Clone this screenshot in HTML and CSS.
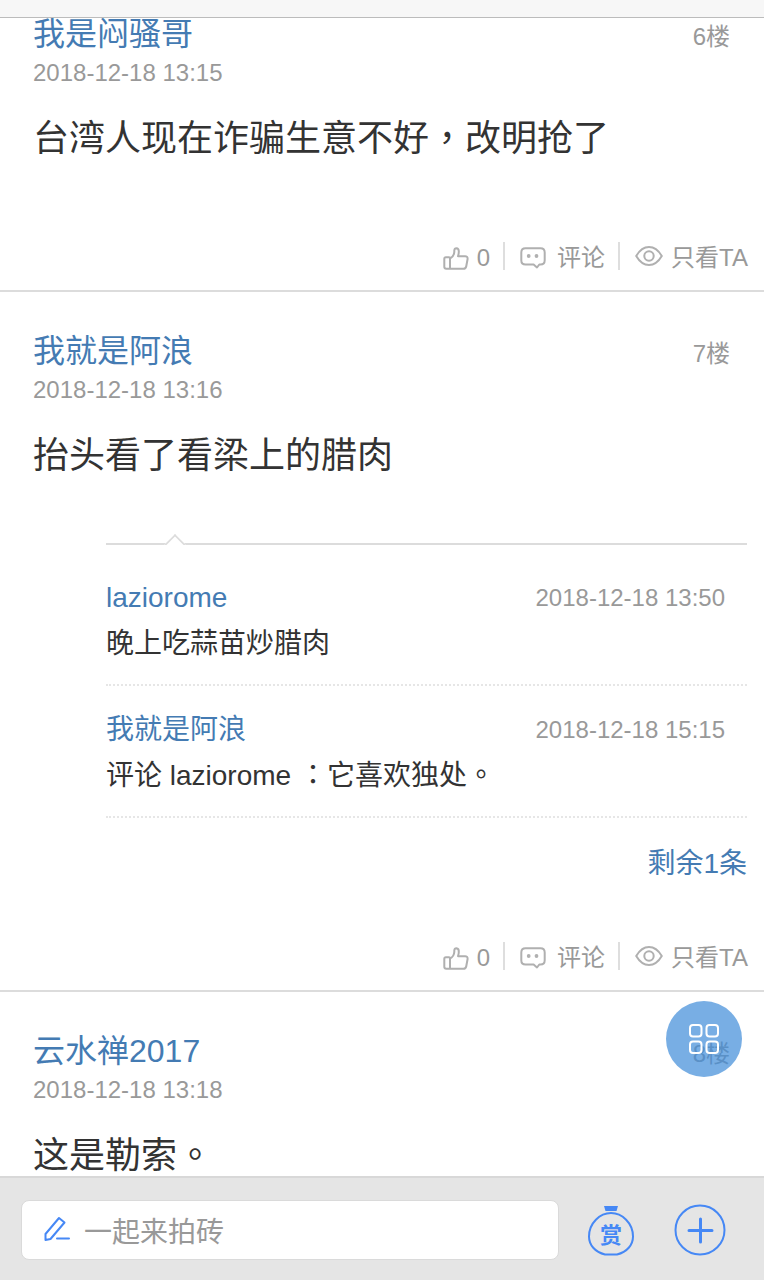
FILE: index.html
```html
<!DOCTYPE html>
<html lang="zh-Hant">
<head>
<meta charset="utf-8">
<meta name="viewport" content="width=device-width, initial-scale=1">
<title>帖子回复</title>
<link rel="stylesheet" href="styles.css">
</head>
<body>
<svg class="sprite" aria-hidden="true">
  <symbol id="like" viewBox="0 0 26 24">
    <path d="M2.800 11.200H6q1 0 1 1v10.600H3.300Q1.300 22.800 1.300 20.800V12.700Q1.300 11.200 2.800 11.200ZM7 12.500Q11 10.500 11.300 6V4.500Q11.500 2.300 13.400 2.300Q16 2.500 15.800 6Q15.700 8.500 15 10.200H22Q24.800 10.200 24.600 13L23.200 20.500Q22.800 22.800 20.400 22.800H7"/>
  </symbol>
  <symbol id="comment" viewBox="0 0 26 24">
    <path d="M5.500 2.200H20.500Q24.700 2.200 24.700 6.400V14.300Q24.700 18.500 20.500 18.500H19.300L17 21.500L13.600 18.500H5.500Q1.300 18.500 1.300 14.300V6.400Q1.300 2.200 5.500 2.200Z"/>
    <circle class="dot" cx="8.700" cy="10" r="1.900"/><circle class="dot" cx="16.500" cy="10" r="1.900"/>
  </symbol>
  <symbol id="eye" viewBox="0 0 28 24">
    <path d="M1.200 10Q6.500 1 14 1T26.800 10Q21.500 19 14 19T1.200 10Z"/>
    <circle cx="14" cy="10" r="4.700"/>
  </symbol>
</svg>
<div class="app">
  <header class="topbar"></header>
  <main class="feed">
    <article class="post post-first">
      <div class="post-head"><a class="name" href="#">我是闷骚哥</a><span class="floor">6楼</span></div>
      <time class="date">2018-12-18 13:15</time>
      <p class="content">台湾人现在诈骗生意不好，改明抢了</p>
      <div class="actions">
        <button class="action"><svg class="icon"><use href="#like"/></svg>0</button>
        <button class="action action-comment"><svg class="icon"><use href="#comment"/></svg>评论</button>
        <button class="action"><svg class="icon icon-eye"><use href="#eye"/></svg>只看TA</button>
      </div>
    </article>
    <article class="post">
      <div class="post-head"><a class="name" href="#">我就是阿浪</a><span class="floor">7楼</span></div>
      <time class="date">2018-12-18 13:16</time>
      <p class="content">抬头看了看梁上的腊肉</p>
      <section class="replies">
        <div class="reply">
          <div class="reply-head"><a class="reply-name" href="#">laziorome</a><time class="reply-date">2018-12-18 13:50</time></div>
          <p class="reply-text">晚上吃蒜苗炒腊肉</p>
        </div>
        <div class="reply">
          <div class="reply-head"><a class="reply-name" href="#">我就是阿浪</a><time class="reply-date">2018-12-18 15:15</time></div>
          <p class="reply-text">评论 laziorome ：它喜欢独处。</p>
        </div>
        <a class="more" href="#">剩余1条</a>
      </section>
      <div class="actions">
        <button class="action"><svg class="icon"><use href="#like"/></svg>0</button>
        <button class="action action-comment"><svg class="icon"><use href="#comment"/></svg>评论</button>
        <button class="action"><svg class="icon icon-eye"><use href="#eye"/></svg>只看TA</button>
      </div>
    </article>
    <article class="post">
      <div class="post-head"><a class="name" href="#">云水禅2017</a><span class="floor">8楼</span></div>
      <time class="date">2018-12-18 13:18</time>
      <p class="content">这是勒索。</p>
    </article>
  </main>
  <footer class="bottombar">
    <label class="composer">
      <svg class="pen" viewBox="0 0 26 26"><path d="M1.500 23V17L15 1L20.500 5.500L6.500 22L1.500 23ZM13 21.500H25"/></svg>
      <input class="composer-input" type="text" placeholder="一起来拍砖" aria-label="一起来拍砖">
    </label>
    <button class="round-btn" aria-label="打赏">
      <svg class="round-icon" viewBox="0 0 52 52">
        <path class="cap" d="M19 2H33L31.500 7H20.500Z"/>
        <path d="M20 50.500C10 48 4 41 4 32.500C4 19 15 9 26 9S48 19 48 32.500C48 41 42 48 32 50.500Z"/>
        <text class="bag-text" x="26" y="39">赏</text>
      </svg>
    </button>
    <button class="round-btn" aria-label="更多">
      <svg class="round-icon" viewBox="0 0 52 52"><circle cx="26" cy="26" r="24.500"/><path class="plus" d="M15 26.500H38M26.500 15V38"/></svg>
    </button>
  </footer>
  <button class="fab" aria-label="菜单">
    <svg class="fab-icon" viewBox="0 0 32 32"><rect x="2" y="2" width="11.500" height="11.500" rx="3"/><rect x="18.500" y="2" width="11.500" height="11.500" rx="3"/><rect x="2" y="18.500" width="11.500" height="11.500" rx="3"/><rect x="18.500" y="18.500" width="11.500" height="11.500" rx="3"/></svg>
  </button>
</div>
</body>
</html>
```
FILE: styles.css
```css
* { box-sizing: border-box; }
body {
  margin: 0;
  background: #fff;
  color: #333;
  font-family: "Liberation Sans", "Noto Sans CJK TC", sans-serif;
}
a { color: #447bb3; text-decoration: none; }
p { margin: 0; }
button { border: 0; padding: 0; background: none; font: inherit; color: inherit; }
svg { fill: none; stroke: currentColor; stroke-width: 2; stroke-linejoin: round; stroke-linecap: round; }
.sprite { display: none; }
.dot { fill: currentColor; stroke: none; }

.app { position: relative; display: flex; flex-direction: column; height: 100vh; overflow: hidden; }
.topbar { flex: none; height: 18px; background: #f7f7f7; border-bottom: 1px solid #bcbcbc; }
.feed { flex: 1; min-height: 0; margin-top: -18px; padding-top: 18px; overflow: hidden; }

.post { padding: 43px 16px 20px 33px; border-bottom: 2px solid #dcdcdc; }
.post-first { padding-top: 0; }
.post-head { display: flex; justify-content: space-between; align-items: center; height: 32px; margin-bottom: 9px; padding-right: 18px; }
.name { font-size: 32px; line-height: 32px; }
.floor { color: #999; font-size: 24px; line-height: 28px; padding-top: 5px; }
.date { display: block; color: #999; font-size: 24px; line-height: 28px; }
.content { margin-top: 28px; font-size: 36px; line-height: 48px; }

.actions { display: flex; justify-content: flex-end; margin-top: 79px; color: #999; font-size: 24px; line-height: 28px; }
.action { display: flex; align-items: center; gap: 8px; height: 28px; padding-top: 3px; }
.action + .action { border-left: 2px solid #dedede; padding-left: 15px; margin-left: 13px; }
.action-comment { gap: 11px; }
.icon { width: 26px; height: 24px; color: #b0b0b0; }
.icon-eye { width: 28px; }

.replies { position: relative; margin: 63px 1px 0 73px; border-top: 2px solid #dcdcdc; padding-top: 9px; }
.replies::before {
  content: "";
  position: absolute;
  top: -8px;
  left: 61px;
  width: 14px;
  height: 14px;
  background: #fff;
  border-top: 2px solid #dcdcdc;
  border-left: 2px solid #dcdcdc;
  transform: rotate(45deg);
  clip-path: polygon(0 0, 100% 0, 0 100%);
}
.reply { padding: 26px 0 22px; border-bottom: 2px dotted #e6e6e6; }
.reply-head { display: flex; justify-content: space-between; align-items: center; padding-right: 22px; height: 36px; margin-bottom: 10px; }
.reply-name { font-size: 28px; line-height: 36px; }
.reply-date { color: #999; font-size: 24px; line-height: 36px; }
.reply-text { font-size: 28px; line-height: 36px; }
.more { display: block; padding-top: 28px; text-align: right; font-size: 28px; line-height: 36px; }
.replies + .actions { margin-top: 60px; }

.bottombar { flex: none; display: flex; align-items: center; padding: 22px 38px 20px 21px; background: #e5e5e5; border-top: 2px solid #d8d8d8; }
.composer { flex: 1; display: flex; align-items: center; gap: 14px; height: 60px; margin-right: 26px; padding-left: 22px; background: #fff; border: 1px solid #dadada; border-radius: 8px; }
.pen { flex: none; width: 26px; height: 28px; color: #4688f5; }
.composer-input { flex: 1; min-width: 0; height: 58px; padding: 6px 0 0; border: 0; outline: 0; background: none; font: inherit; font-size: 28px; }
.composer-input::placeholder { color: #999; opacity: 1; }
.round-btn { flex: none; width: 52px; height: 52px; color: #4688f5; }
.round-btn + .round-btn { margin-left: 37px; }
.round-icon { display: block; width: 52px; height: 52px; }
.cap { fill: currentColor; stroke: none; }
.plus { stroke-width: 3; }
.bag-text { fill: currentColor; stroke: none; font-size: 22px; font-weight: 700; text-anchor: middle; }

.fab { position: absolute; right: 22px; bottom: 203px; display: grid; place-items: center; width: 76px; height: 76px; border-radius: 50%; background: rgba(62, 140, 217, 0.7); color: #fff; }
.fab-icon { width: 32px; height: 32px; margin-bottom: 1px; }
```
